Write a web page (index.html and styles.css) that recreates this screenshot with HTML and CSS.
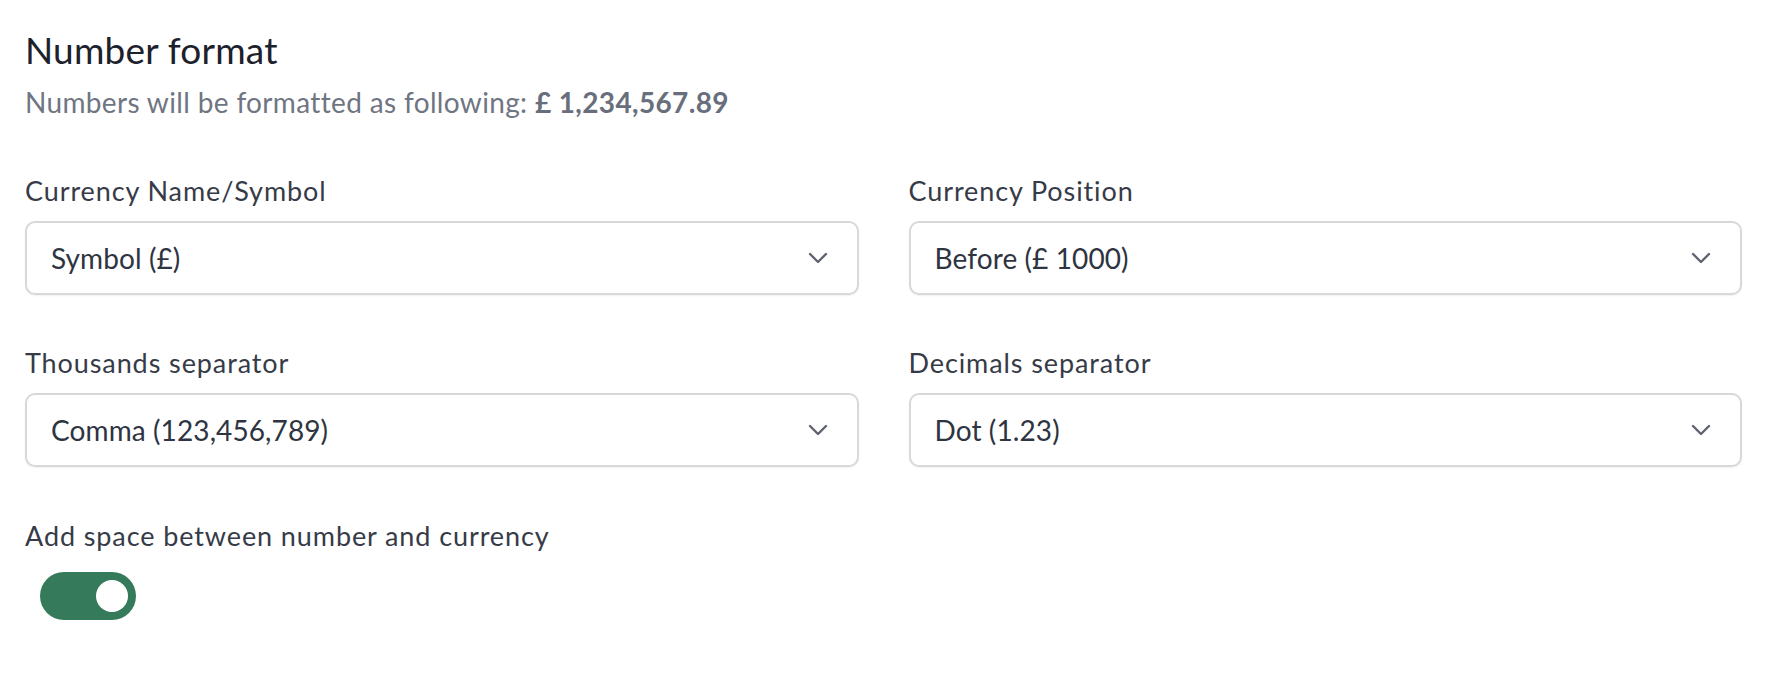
FILE: index.html
```html
<!DOCTYPE html>
<html lang="en">
<head>
<meta charset="utf-8">
<title>Number format</title>
<link rel="stylesheet" href="styles.css">
</head>
<body>
<main class="panel">
  <h1 class="title">Number format</h1>
  <p class="subtitle">Numbers will be formatted as following: <strong class="preview">£ 1,234,567.89</strong></p>

  <div class="grid">
    <div class="field">
      <div class="label">Currency Name/Symbol</div>
      <div class="select">
        <span class="value">Symbol (£)</span>
        <svg class="chev" width="20" height="12" viewBox="0 0 20 12"><path d="M2 2 L10 10 L18 2" fill="none" stroke="currentColor" stroke-width="2.4" stroke-linecap="round" stroke-linejoin="round"/></svg>
      </div>
    </div>
    <div class="field">
      <div class="label">Currency Position</div>
      <div class="select">
        <span class="value">Before (£ 1000)</span>
        <svg class="chev" width="20" height="12" viewBox="0 0 20 12"><path d="M2 2 L10 10 L18 2" fill="none" stroke="currentColor" stroke-width="2.4" stroke-linecap="round" stroke-linejoin="round"/></svg>
      </div>
    </div>
    <div class="field">
      <div class="label">Thousands separator</div>
      <div class="select">
        <span class="value">Comma (123,456,789)</span>
        <svg class="chev" width="20" height="12" viewBox="0 0 20 12"><path d="M2 2 L10 10 L18 2" fill="none" stroke="currentColor" stroke-width="2.4" stroke-linecap="round" stroke-linejoin="round"/></svg>
      </div>
    </div>
    <div class="field">
      <div class="label">Decimals separator</div>
      <div class="select">
        <span class="value">Dot (1.23)</span>
        <svg class="chev" width="20" height="12" viewBox="0 0 20 12"><path d="M2 2 L10 10 L18 2" fill="none" stroke="currentColor" stroke-width="2.4" stroke-linecap="round" stroke-linejoin="round"/></svg>
      </div>
    </div>
  </div>

  <div class="toggle-field">
    <div class="label">Add space between number and currency</div>
    <div class="toggle on"><span class="knob"></span></div>
  </div>
</main>
</body>
</html>
```

FILE: styles.css
```css
html, body {
  margin: 0;
  padding: 0;
  background: #ffffff;
}

body {
  font-family: Lato, "Noto Sans", "Liberation Sans", sans-serif;
  color: #2f3542;
}

.panel {
  padding: 28px 26px 0 25px;
}

.title {
  margin: 0;
  font-size: 37px;
  line-height: 44px;
  font-weight: 400;
  letter-spacing: 0.2px;
  color: #1c212c;
}

.subtitle {
  margin: 12px 0 0;
  font-size: 28px;
  line-height: 36px;
  letter-spacing: 0.35px;
  color: #6f7582;
}

.preview {
  font-weight: 700;
  color: #686e7b;
}

.grid {
  margin-top: 53px;
  display: grid;
  grid-template-columns: 1fr 1fr;
  column-gap: 50px;
  row-gap: 50px;
}

.label {
  font-size: 27px;
  line-height: 36px;
  letter-spacing: 0.9px;
  color: #363b47;
}

.select {
  margin-top: 12px;
  height: 74px;
  box-sizing: border-box;
  border: 2px solid #d8d8d8;
  border-radius: 10px;
  box-shadow: 0 1px 2px rgba(0, 0, 0, 0.06);
  display: flex;
  align-items: center;
  justify-content: space-between;
  padding: 0 29px 0 24px;
}

.value {
  font-size: 28px;
  letter-spacing: 0.1px;
  color: #2e3441;
}

.chev {
  color: #5f6370;
}

.toggle-field {
  margin-top: 51px;
}

.toggle {
  margin: 18px 0 0 15px;
  width: 96px;
  height: 48px;
  border-radius: 24px;
  background: #357a5a;
  display: flex;
  align-items: center;
  justify-content: flex-end;
  padding: 0 8px;
  box-sizing: border-box;
}

.knob {
  width: 32px;
  height: 32px;
  border-radius: 50%;
  background: #ffffff;
}
```
